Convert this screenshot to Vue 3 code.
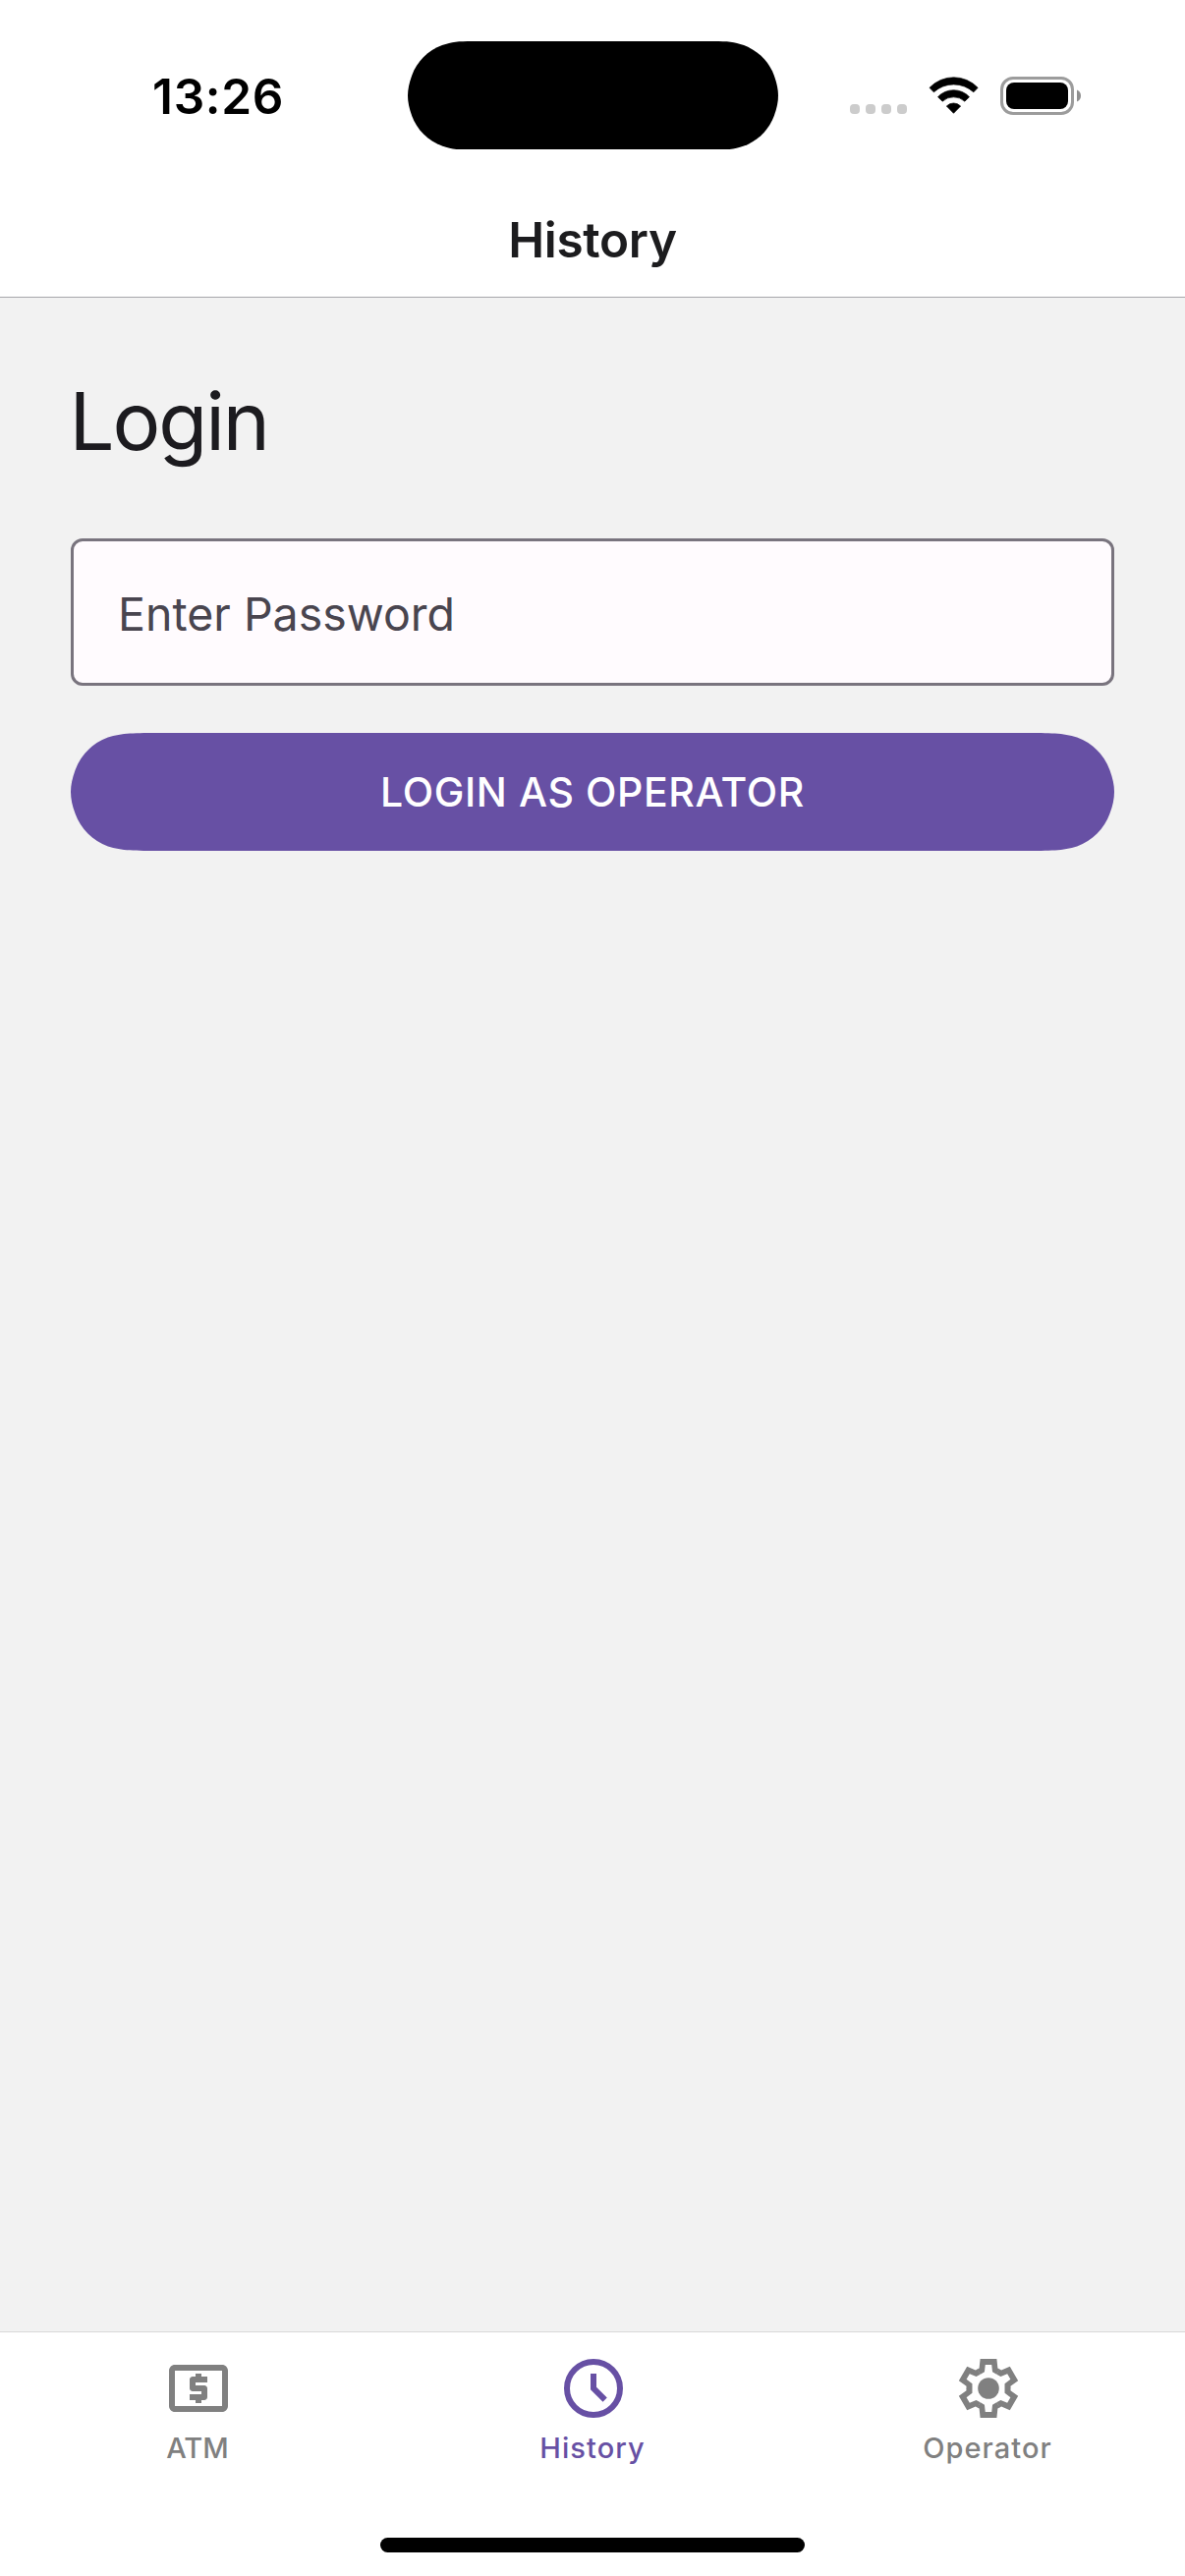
<script setup>
const tabs = [
  { key: 'atm', label: 'ATM', active: false },
  { key: 'history', label: 'History', active: true },
  { key: 'operator', label: 'Operator', active: false },
]
const toothAngles = [0, 60, 120, 180, 240, 300]
</script>

<template>
  <div class="screen">
    <header class="header">
      <div class="status">
        <div class="time">13:26</div>
        <svg class="island" viewBox="0 0 377 110.6">
          <path d="M66 0H311C326 0 332 .5 342.100 4.100C356.400 9.300 367.700 20.600 372.900 34.900C375.800 43 377 49 377 55.300S375.800 67.600 372.900 75.700C367.700 90 356.400 101.300 342.100 106.500C332 110.100 326 110.600 311 110.600H66C51 110.600 45 110.100 34.900 106.500C20.600 101.300 9.300 90 4.100 75.700C1.200 67.600 0 61.600 0 55.300S1.200 43 4.100 34.900C9.300 20.600 20.600 9.300 34.900 4.100C45 .5 51 0 66 0Z" />
        </svg>
        <div class="indicators">
          <div class="dots"><i v-for="n in 4" :key="n"></i></div>
          <svg class="wifi" viewBox="315 85 153 115">
            <path d="M318 119A101.6 101.6 0 0 1 465.500 119L452.500 132.500A89.800 89.800 0 0 0 331 132.500Z" stroke="#000" stroke-width="2" stroke-linejoin="round" />
            <path d="M343.500 147A65.600 65.600 0 0 1 439.500 147L425.500 160.500A51 51 0 0 0 357.500 160.500Z" stroke="#000" stroke-width="2" stroke-linejoin="round" />
            <path d="M370 175A30 30 0 0 1 413 175L391.500 197Z" stroke="#000" stroke-width="2" stroke-linejoin="round" />
          </svg>
          <svg class="battery" viewBox="0 0 84 40">
            <rect x="1.500" y="1.500" width="72" height="36" rx="11.500" fill="none" stroke="#9c9c9c" stroke-width="3" />
            <rect x="6" y="6" width="63" height="27" rx="8" />
            <path d="M78 13.500C80.500 14.500 82 16.800 82 19.500S80.500 24.500 78 25.500Z" fill="#8f8f8f" />
          </svg>
        </div>
      </div>
      <h1 class="title">History</h1>
    </header>

    <main class="content">
      <h2 class="heading">Login</h2>
      <div class="field">Enter Password</div>
      <button class="login" type="button">
        <svg class="pill" viewBox="0 0 1062 120">
          <path d="M92 0H970C996.700 0 1009.900 0 1024.100 4.500C1039.600 10.100 1051.900 22.400 1057.500 37.900C1060.500 46 1062 53 1062 60S1060.500 74 1057.500 82.100C1051.900 97.600 1039.600 109.900 1024.100 115.500C1009.900 120 996.700 120 970 120H92C65.300 120 52.100 120 37.900 115.500C22.400 109.900 10.100 97.600 4.500 82.100C1.500 74 0 67 0 60S1.500 46 4.500 37.900C10.100 22.400 22.400 10.100 37.900 4.500C52.100 0 65.300 0 92 0Z" />
        </svg>
        <span class="login-label">LOGIN AS OPERATOR</span>
      </button>
    </main>

    <nav class="tabbar">
      <div class="tabs">
        <div v-for="tab in tabs" :key="tab.key" class="tab" :class="[tab.key, { active: tab.active }]">
          <svg v-if="tab.key === 'atm'" class="icon" viewBox="0 0 24 24">
            <path d="M11 17h2v-1h1c.55 0 1-.45 1-1v-3c0-.55-.45-1-1-1h-3v-1h4V8h-2V7h-2v1h-1c-.55 0-1 .45-1 1v3c0 .55.45 1 1 1h3v1H9v2h2v1zm9-13H4c-1.110 0-1.990.89-1.990 2L2 18c0 1.110.89 2 2 2h16c1.110 0 2-.89 2-2V6c0-1.110-.89-2-2-2zm0 14H4V6h16v12z" />
          </svg>
          <svg v-else-if="tab.key === 'history'" class="icon" viewBox="0 0 24 24">
            <circle cx="12" cy="12" r="9" fill="none" stroke="currentColor" stroke-width="2" />
            <path d="M11 7h2v4.600l3.600 3.600-1.410 1.410L11 12.420z" />
          </svg>
          <svg v-else class="icon" viewBox="-12 -12 24 24">
            <circle r="3.600" />
            <path
              v-for="angle in toothAngles"
              :key="angle"
              :transform="`rotate(${angle})`"
              d="M-2.800 -10H2.800L3.130 -6.850L3.750 -6.500L2.750 -4.770L1.350 -5.580L1.080 -8H-1.080L-1.350 -5.580L-2.750 -4.770L-3.900 -6.420L-3.130 -6.850Z"
            />
          </svg>
          <span class="label">{{ tab.label }}</span>
        </div>
      </div>
      <div class="home"></div>
    </nav>
  </div>
</template>

<style>
body {
  margin: 0;
}
</style>

<style scoped>
.screen {
  display: flex;
  flex-direction: column;
  width: 1206px;
  height: 2622px;
  overflow: hidden;
  background: #f2f2f2;
  font-family: Inter, "Liberation Sans", sans-serif;
  color: #1c1b1f;
}
.header {
  box-sizing: border-box;
  height: 303px;
  background: #fff;
  border-bottom: 1px solid #a7a7aa;
}
.status {
  display: grid;
  grid-template-columns: 414.5px 377px 1fr;
  height: 194px;
  align-items: center;
}
.time {
  padding-left: 155px;
  padding-top: 2px;
  font-size: 49.5px;
  font-weight: 600;
  line-height: 60px;
  letter-spacing: 0.7px;
  color: #000;
}
.island {
  display: block;
  width: 377px;
  height: 110.6px;
}
.indicators {
  display: flex;
  align-items: flex-start;
  height: 40px;
  margin-top: 2px;
  padding-left: 73.5px;
}
.dots {
  display: flex;
  gap: 6px;
  margin-top: 28px;
}
.dots i {
  width: 10px;
  height: 10px;
  border-radius: 4px;
  background: #ccc;
}
.wifi {
  width: 51px;
  height: 38.33px;
  margin-left: 22px;
}
.battery {
  width: 84px;
  height: 40px;
  margin-left: 22px;
}
.title {
  margin: 20px 0 0;
  font-size: 49.5px;
  font-weight: 600;
  line-height: 60px;
  letter-spacing: -0.3px;
  text-align: center;
  color: #1c1c1e;
}
.content {
  flex: 1;
  display: flex;
  flex-direction: column;
  padding: 72px 72px 0;
}
.heading {
  margin: 0 0 65px -1.500px;
  font-size: 81.5px;
  font-weight: 400;
  line-height: 108px;
  letter-spacing: -2.1px;
}
.field {
  box-sizing: border-box;
  height: 150px;
  padding: 2px 45px 0;
  border: 3px solid #79747e;
  border-radius: 12px;
  background: #fffbfe;
  font-size: 46.5px;
  line-height: 144px;
  color: #49454f;
}
.login {
  display: grid;
  place-items: center;
  width: 1062px;
  height: 120px;
  margin-top: 48px;
  padding: 0;
  border: 0;
  background: none;
  font: inherit;
}
.pill,
.login-label {
  grid-area: 1 / 1;
}
.pill {
  width: 1062px;
  height: 120px;
  fill: #6750a4;
}
.login-label {
  font-size: 41px;
  font-weight: 500;
  line-height: 60px;
  letter-spacing: 0.6px;
  color: #fff;
}
.tabbar {
  display: flex;
  flex-direction: column;
  align-items: center;
  box-sizing: border-box;
  height: 249px;
  border-top: 1px solid #d8d8d8;
  background: #fff;
}
.tabs {
  display: flex;
  width: 100%;
  height: 209px;
}
.tab {
  flex: 1;
  display: flex;
  flex-direction: column;
  align-items: center;
  padding-top: 21px;
  color: #808080;
}
.tab.active {
  color: #6750a4;
}
.icon {
  width: 72px;
  height: 72px;
  margin-left: 2px;
  fill: currentColor;
}
.label {
  margin-top: 6px;
  font-size: 29px;
  font-weight: 500;
  line-height: 37px;
  letter-spacing: 1.050px;
}
.tab.atm .label {
  letter-spacing: 0;
}
.home {
  width: 432px;
  height: 15px;
  border-radius: 8px;
  background: #000;
}
</style>
